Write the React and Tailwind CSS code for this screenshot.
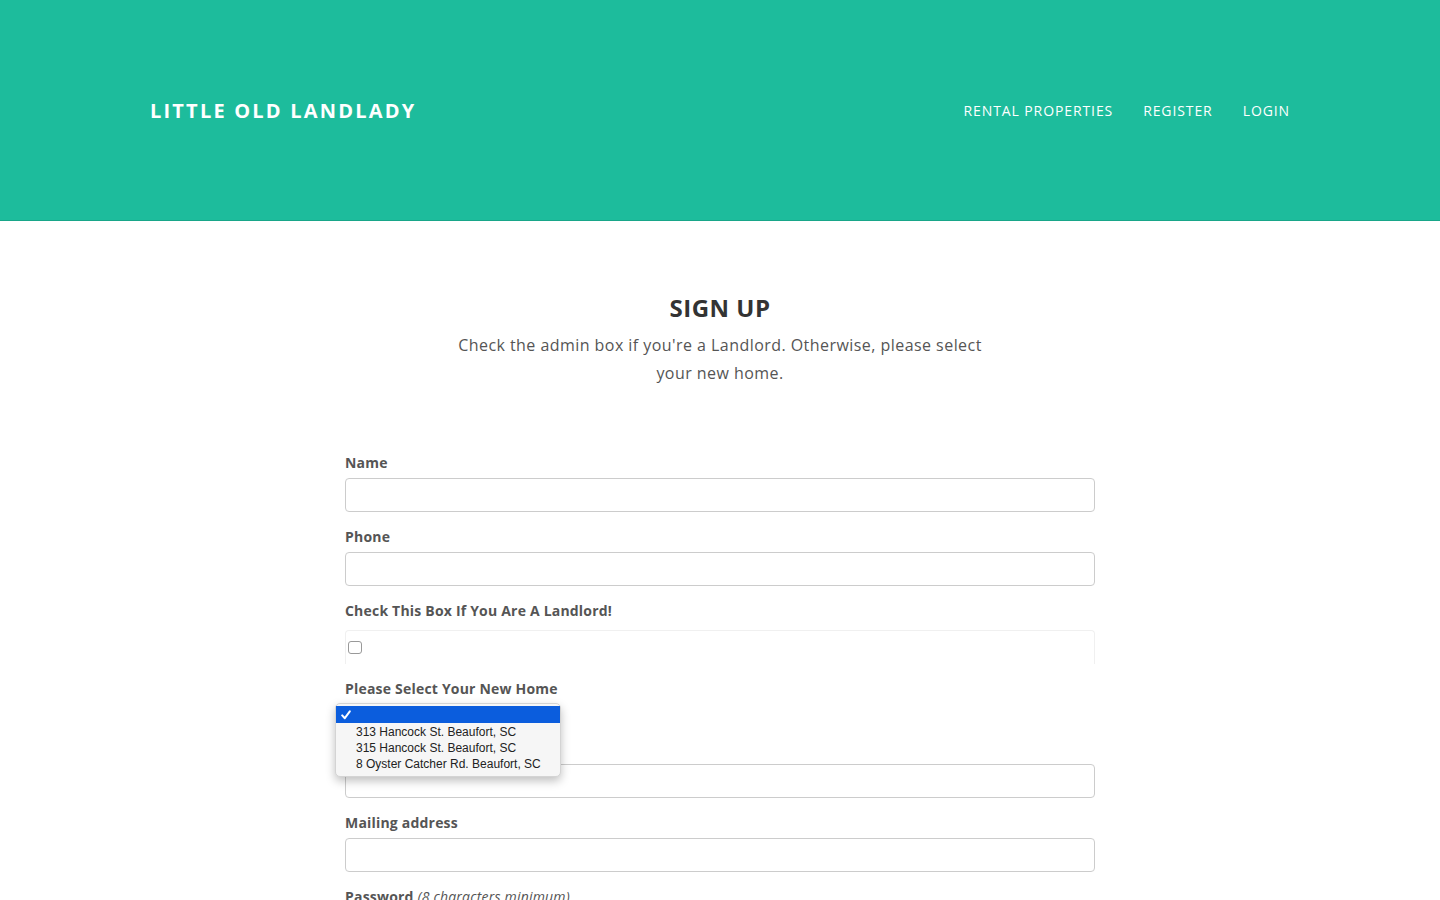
import React from 'react';

const font = { fontFamily: '"Open Sans", "Liberation Sans", sans-serif' };

function Field({ label, children }) {
  return (
    <div className="mb-[15px]">
      <label className="block text-[14px] font-bold text-[#555] leading-[20px] tracking-[0.2px] mb-[5px]">{label}</label>
      {children}
    </div>
  );
}

function TextInput() {
  return <div className="h-[34px] w-full rounded-[4px] border border-[#ccc] bg-white" />;
}

export default function App() {
  const homes = [
    "313 Hancock St. Beaufort, SC",
    "315 Hancock St. Beaufort, SC",
    "8 Oyster Catcher Rd. Beaufort, SC",
  ];

  return (
    <div className="min-h-[900px] bg-white" style={font}>
      {/* Header */}
      <header className="h-[221px] bg-[#1dbc9c] border-b border-[#18a689]">
        <div className="mx-auto flex h-full w-[1140px] items-center justify-between pt-[1px]">
          <a className="text-[20px] font-bold tracking-[2.2px] text-white leading-none">LITTLE OLD LANDLADY</a>
          <nav className="flex items-center gap-[30px] text-[14px] text-white tracking-[0.9px]">
            <a>RENTAL PROPERTIES</a>
            <a>REGISTER</a>
            <a>LOGIN</a>
          </nav>
        </div>
      </header>

      {/* Intro */}
      <section className="pt-[72px] text-center">
        <h2 className="text-[24px] font-bold text-[#333] tracking-[0.5px] leading-[30px]">SIGN UP</h2>
        <p className="mx-auto mt-[8px] w-[545px] text-[16px] leading-[28px] text-[#555] tracking-[0.45px]">
          Check the admin box if you're a Landlord. Otherwise, please select your new home.
        </p>
      </section>

      {/* Form */}
      <form className="mx-auto mt-[66px] w-[750px]">
        <Field label="Name"><TextInput /></Field>
        <Field label="Phone"><TextInput /></Field>
        <div className="mb-[15px]">
          <label className="block text-[14px] font-bold text-[#555] leading-[20px] tracking-[0.2px] mb-[9px]">Check This Box If You Are A Landlord!</label>
          <div className="h-[34px] rounded-t-[4px] border-x border-t border-[#f0f0f0] pl-[2px] pt-[10px]">
            <div className="h-[13px] w-[14px] rounded-[3px] border border-[#999] bg-white" />
          </div>
        </div>
        <div className="mb-[15px]">
          <label className="block text-[14px] font-bold text-[#555] leading-[20px] tracking-[0.2px] mb-[5px]">Please Select Your New Home</label>
          <div className="relative h-[20px]">
            <div className="h-[20px] w-[215px] rounded-[4px] border border-[#ccc] bg-white" />
            <div className="absolute left-[-10px] top-[-1px] z-10 w-[226px] rounded-[5px] border border-[#d4d4d4] bg-[#f6f6f6] py-[2px] shadow-[0_4px_10px_rgba(0,0,0,0.25)]" style={{ fontFamily: '"Liberation Sans", Arial, sans-serif' }}>
              <div className="flex h-[17px] items-center bg-[#0b5ddd] pl-[5px]">
                <svg width="10" height="10" viewBox="0 0 10 10">
                  <path d="M1.2 5.4 L3.8 8.2 L8.8 1.4" fill="none" stroke="#fff" strokeWidth="2" strokeLinecap="round" strokeLinejoin="round" />
                </svg>
              </div>
              <div className="pt-[1px] pb-[2px]">
                {homes.map(h => (
                  <div key={h} className="h-[16px] pl-[20px] text-[12px] leading-[16px] text-[#222]">{h}</div>
                ))}
              </div>
            </div>
          </div>
        </div>
        <Field label="Email"><TextInput /></Field>
        <Field label="Mailing address"><TextInput /></Field>
        <Field label={<>Password <span className="font-normal italic">(8 characters minimum)</span></>}><TextInput /></Field>
        <Field label="Password confirmation"><TextInput /></Field>
      </form>
    </div>
  );
}
